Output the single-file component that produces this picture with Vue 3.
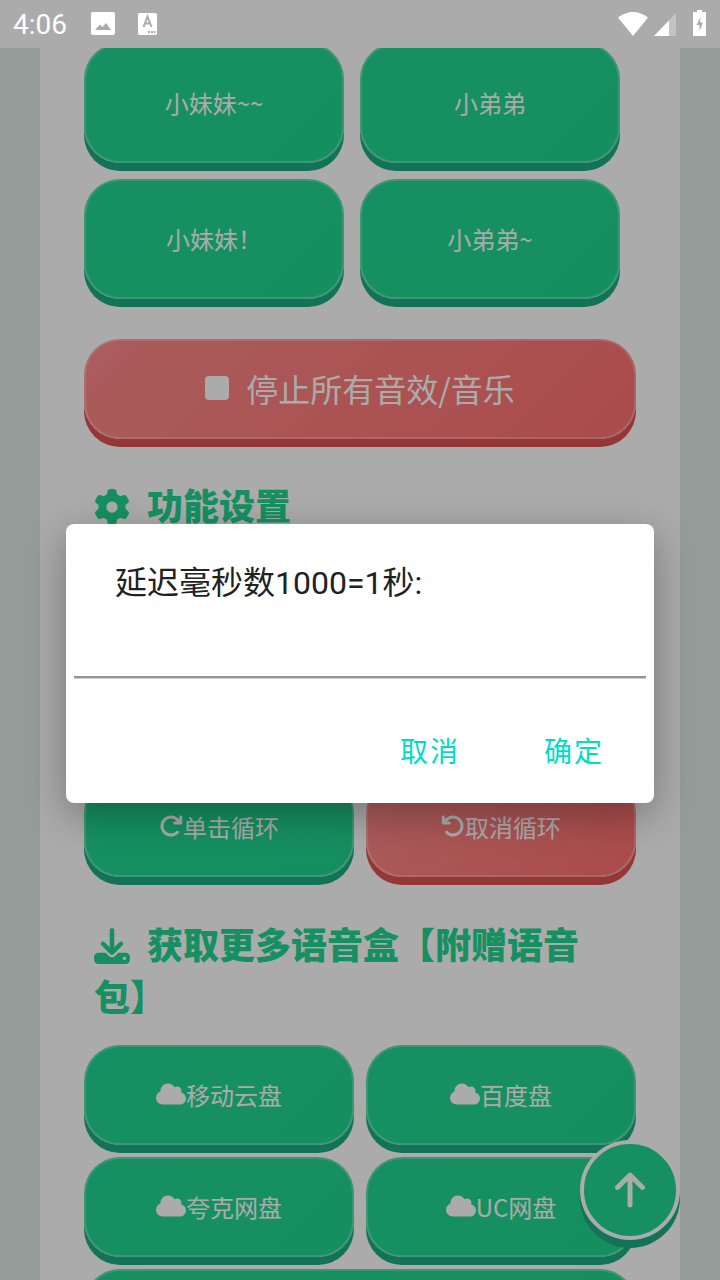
<script setup>
const ICONS = {
  cloud: { box: "0 0 640 512", d: "M0 336c0 79.5 64.5 144 144 144H512c70.7 0 128-57.3 128-128c0-61.9-44-113.6-102.4-125.4c4.1-10.7 6.4-22.4 6.4-34.6c0-53-43-96-96-96c-19.7 0-38.1 6-53.3 16.2C367 64.2 315.3 32 256 32C167.6 32 96 103.6 96 192c0 2.7 .1 5.4 .2 8.1C40.2 219.8 0 273.2 0 336z" },
  redo: { box: "0 0 512 512", d: "M386.3 160H336c-17.7 0-32 14.3-32 32s14.3 32 32 32H464c17.7 0 32-14.3 32-32V64c0-17.7-14.3-32-32-32s-32 14.3-32 32v51.2L414.4 97.6c-87.5-87.5-229.3-87.5-316.8 0s-87.5 229.3 0 316.8s229.3 87.5 316.8 0c12.5-12.5 12.5-32.8 0-45.3s-32.8-12.5-45.3 0c-62.5 62.5-163.8 62.5-226.3 0s-62.5-163.8 0-226.3s163.8-62.5 226.3 0L386.3 160z" },
  undo: { box: "0 0 512 512", d: "M125.7 160H176c17.7 0 32 14.3 32 32s-14.3 32-32 32H48c-17.7 0-32-14.3-32-32V64c0-17.7 14.3-32 32-32s32 14.3 32 32v51.2L97.6 97.6c87.5-87.5 229.3-87.5 316.8 0s87.5 229.3 0 316.8s-229.3 87.5-316.8 0c-12.5-12.5-12.5-32.8 0-45.3s32.8-12.5 45.3 0c62.5 62.5 163.8 62.5 226.3 0s62.5-163.8 0-226.3s-163.8-62.5-226.3 0L125.7 160z" },
};

const gear = "M495.9 166.6c3.2 8.7 .5 18.4-6.4 24.6l-43.3 39.4c1.1 8.3 1.7 16.8 1.7 25.4s-.6 17.1-1.7 25.4l43.3 39.4c6.9 6.2 9.6 15.9 6.4 24.6c-4.4 11.9-9.7 23.3-15.8 34.3l-4.7 8.1c-6.6 11-14 21.4-22.1 31.2c-5.9 7.2-15.7 9.6-24.5 6.8l-55.7-17.7c-13.4 10.3-28.2 18.9-44 25.4l-12.5 57.1c-2 9.1-9 16.3-18.2 17.8c-13.8 2.3-28 3.5-42.5 3.5s-28.7-1.2-42.5-3.5c-9.2-1.5-16.2-8.7-18.2-17.8l-12.5-57.1c-15.8-6.5-30.6-15.1-44-25.4L83.1 425.9c-8.8 2.8-18.6 .3-24.5-6.8c-8.1-9.8-15.5-20.2-22.1-31.2l-4.7-8.1c-6.1-11-11.4-22.4-15.8-34.3c-3.2-8.7-.5-18.4 6.4-24.6l43.3-39.4C64.6 273.1 64 264.6 64 256s.6-17.1 1.7-25.4L22.4 191.2c-6.9-6.2-9.6-15.9-6.4-24.6c4.4-11.9 9.7-23.3 15.8-34.3l4.7-8.1c6.6-11 14-21.4 22.1-31.2c5.9-7.2 15.7-9.6 24.5-6.8l55.7 17.7c13.4-10.3 28.2-18.9 44-25.4l12.5-57.1c2-9.1 9-16.3 18.2-17.8C227.3 1.2 241.5 0 256 0s28.7 1.2 42.5 3.5c9.2 1.5 16.2 8.7 18.2 17.8l12.5 57.1c15.8 6.5 30.6 15.1 44 25.4l55.7-17.7c8.8-2.8 18.6-.3 24.5 6.8c8.1 9.8 15.5 20.2 22.1 31.2l4.7 8.1c6.1 11 11.4 22.4 15.8 34.3zM256 336a80 80 0 1 0 0-160 80 80 0 1 0 0 160z";
const download = "M288 32c0-17.7-14.3-32-32-32s-32 14.3-32 32V274.7l-73.4-73.4c-12.5-12.5-32.8-12.5-45.3 0s-12.5 32.8 0 45.3l128 128c12.5 12.5 32.8 12.5 45.3 0l128-128c12.5-12.5 12.5-32.8 0-45.3s-32.8-12.5-45.3 0L288 274.7V32zM64 352c-35.3 0-64 28.7-64 64v32c0 35.3 28.7 64 64 64H448c35.3 0 64-28.7 64-64V416c0-35.3-28.7-64-64-64H346.5l-45.3 45.3c-25 25-65.5 25-90.5 0L165.5 352H64zm368 56a24 24 0 1 1 0 48 24 24 0 1 1 0-48z";

const voices = ["小妹妹~~", "小弟弟", "小妹妹！", "小弟弟~"];
const clouds = ["移动云盘", "百度盘", "夸克网盘", "UC网盘"];
</script>

<template>
  <div class="screen">
    <header class="statusbar">
      <span class="clock">4:06</span>
      <svg class="st-icon" width="24" height="23" viewBox="0 0 24 23">
        <path fill="#fff" fill-rule="evenodd" d="M2 0h20a2 2 0 0 1 2 2v19a2 2 0 0 1-2 2H2a2 2 0 0 1-2-2V2a2 2 0 0 1 2-2zM4 18h16l-5-7-3.5 4-2.500-2.500z" />
      </svg>
      <svg class="st-icon second" width="19" height="22" viewBox="0 0 19 22">
        <path fill="#fff" d="M2 0h15a2 2 0 0 1 2 2v18a2 2 0 0 1-2 2H2a2 2 0 0 1-2-2V2a2 2 0 0 1 2-2z" />
        <path fill="none" stroke="#ababab" stroke-width="2" d="M5.500 14 9.500 3.500 13.500 14M7 10.500h5" />
        <path fill="#ababab" d="M10 18h2v2h-2zM13 18h2v2h-2zM16 18h1.500v2H16z" />
      </svg>
      <span class="spacer"></span>
      <svg class="wifi" width="30" height="24" viewBox="0 0 30 24">
        <path fill="#fff" d="M15 24 0 5.500Q15-5.500 30 5.500z" />
      </svg>
      <svg class="signal" width="22" height="24" viewBox="0 0 22 24">
        <path fill="#fff" fill-opacity=".3" d="M22 1v23H0z" />
        <path fill="#fff" d="M15 8.500V24H0z" />
      </svg>
      <svg class="battery" width="13" height="26" viewBox="0 0 13 26">
        <path fill="#fff" fill-rule="evenodd" d="M4 0h5v2h4v24H0V2h4zM7.500 7 3.500 15h3v6l3.500-8.500H7z" />
      </svg>
    </header>

    <main class="viewport">
      <div class="panel">
        <div class="voice-grid">
          <button v-for="v in voices" :key="v" class="btn">{{ v }}</button>
        </div>

        <button class="btn red stop">
          <svg class="stop-icon" viewBox="0 0 24 24"><rect width="24" height="24" rx="4" fill="#fff" /></svg>
          停止所有音效/音乐
        </button>

        <h2 class="heading">
          <svg class="h-icon" viewBox="0 0 512 512"><path :d="gear" /></svg>功能设置
        </h2>

        <div class="grid">
          <button v-for="n in 4" :key="n" class="btn short"></button>
          <button class="btn short">
            <svg class="ic" :viewBox="ICONS.redo.box"><path :d="ICONS.redo.d" /></svg>单击循环
          </button>
          <button class="btn short red">
            <svg class="ic" :viewBox="ICONS.undo.box"><path :d="ICONS.undo.d" /></svg>取消循环
          </button>
        </div>

        <h2 class="heading more">
          <svg class="h-icon" viewBox="0 0 512 512"><path :d="download" /></svg>获取更多语音盒【附赠语音<br />包】
        </h2>

        <div class="grid">
          <button v-for="c in clouds" :key="c" class="btn short">
            <svg class="ic cloud" :viewBox="ICONS.cloud.box"><path :d="ICONS.cloud.d" /></svg>{{ c }}
          </button>
          <button class="btn short wide"></button>
        </div>
      </div>

      <button class="fab">
        <svg width="40" height="40" viewBox="0 0 448 512">
          <path fill="#fff" transform="translate(32 0)" d="M214.600 41.400c-12.500-12.500-32.800-12.500-45.300 0l-160 160c-12.500 12.500-12.500 32.800 0 45.300s32.800 12.500 45.300 0L160 141.200V448c0 17.700 14.300 32 32 32s32-14.300 32-32V141.200L329.400 246.600c12.500 12.500 32.800 12.500 45.300 0s12.500-32.800 0-45.300l-160-160z" />
        </svg>
      </button>

      <div class="dim">
        <div class="dialog">
          <p class="prompt">延迟毫秒数1000=1秒:</p>
          <div class="input"></div>
          <div class="actions">
            <button class="action">取消</button>
            <button class="action">确定</button>
          </div>
        </div>
      </div>
    </main>
  </div>
</template>

<style>
html,
body {
  margin: 0;
  background: #fff;
}
</style>

<style scoped>
.screen {
  width: 720px;
  height: 1280px;
  overflow: hidden;
  font-family: Roboto, "Noto Sans CJK SC", sans-serif;
  text-spacing-trim: space-all;
}

.statusbar {
  height: 48px;
  background: #ababab;
  display: flex;
  align-items: center;
  padding: 0 14px 0 13px;
  box-sizing: border-box;
}

.clock {
  font-size: 28px;
  color: #fff;
  width: 78px;
}

.st-icon {
  margin-top: -1px;
}

.second {
  margin-left: 23px;
}

.spacer {
  flex: 1;
}

.signal {
  margin-left: 6px;
}

.battery {
  margin-left: 17px;
  margin-top: -2px;
}

.viewport {
  position: relative;
  height: 1232px;
  overflow: hidden;
  background: #e0e9e6;
}

.panel {
  width: 640px;
  margin: 0 40px;
  padding: 0 44px;
  box-sizing: border-box;
  background: #fff;
  min-height: 100%;
}

.voice-grid {
  display: grid;
  grid-template-columns: 260px 260px;
  gap: 16px;
  transform: translateY(-5px);
  margin-bottom: -5px;
}

.btn {
  height: 120px;
  border: 2px solid rgba(255, 255, 255, 0.25);
  border-radius: 36px;
  background: linear-gradient(135deg, #21d792, #21d690) border-box;
  box-shadow: 0 8px 0 #1bac83;
  color: #fff;
  font-family: "Noto Sans CJK SC", sans-serif;
  font-size: 24px;
  font-weight: 400;
  display: flex;
  align-items: center;
  justify-content: center;
  padding: 0 0 2px;
  box-sizing: border-box;
}

.short {
  height: 100px;
}

.wide {
  grid-column: 1 / 3;
}

.red {
  background: linear-gradient(135deg, #ff8a8a, #ff7070) border-box;
  box-shadow: 0 8px 0 #e05252;
}

.stop {
  width: 100%;
  height: 100px;
  margin-top: 40px;
  font-size: 32px;
}

.stop-icon {
  width: 24px;
  height: 24px;
  margin-right: 17px;
}

.heading {
  margin: 43px 0 19px;
  padding-left: 10px;
  font-size: 36px;
  line-height: 52px;
  font-weight: 900;
  color: #21d792;
}

.more {
  margin: 44px 0 20px;
}

.h-icon {
  width: 36px;
  height: 36px;
  margin-right: 17px;
  vertical-align: -5px;
  fill: #21d792;
}

.grid {
  display: grid;
  grid-template-columns: 270px 270px;
  gap: 12px;
}

.ic {
  width: 24px;
  height: 24px;
  fill: #fff;
}

.cloud {
  width: 30px;
}

.fab {
  position: absolute;
  left: 580px;
  top: 1092px;
  width: 100px;
  height: 100px;
  border-radius: 50%;
  border: 4px solid #fff;
  background: #21d792;
  box-shadow: 0 8px 0 #1bac83;
  display: flex;
  align-items: center;
  justify-content: center;
  padding: 0;
  box-sizing: border-box;
}

.dim {
  position: absolute;
  inset: 0;
  background: rgba(0, 0, 0, 0.33);
  display: flex;
  align-items: center;
  justify-content: center;
}

.dialog {
  width: 588px;
  height: 279px;
  margin-top: -1px;
  background: #fff;
  border-radius: 8px;
  box-shadow: 0 12px 40px rgba(0, 0, 0, 0.3);
  box-sizing: border-box;
  padding: 0 8px;
  display: flex;
  flex-direction: column;
}

.prompt {
  margin: 36px 0 0 41px;
  font-size: 32px;
  line-height: 46px;
  color: #212121;
}

.input {
  margin-top: 70px;
  height: 2px;
  background: #949494;
  box-shadow: 0 1px 0 #d0d0d0;
}

.actions {
  display: flex;
  justify-content: flex-end;
  gap: 84px;
  margin-top: 52px;
  padding-right: 42px;
}

.action {
  border: 0;
  background: none;
  padding: 0;
  font-family: inherit;
  font-size: 28px;
  letter-spacing: 2px;
  line-height: 46px;
  color: #00dcc4;
}
</style>
